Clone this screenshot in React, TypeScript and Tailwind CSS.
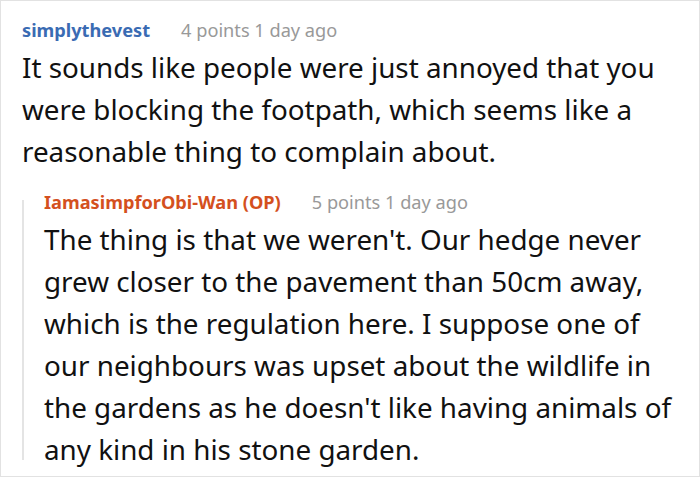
export default function App() {
  return (
    <div className="w-[700px] h-[478px] bg-white" style={{ fontFamily: '"Noto Sans", sans-serif' }}>
      <div className="w-[700px] h-[477px] border border-[#e2e2e2] pl-[21px] pr-[23px] pt-[14px]">
        <div className="flex items-baseline gap-[31px] text-[18.2px] leading-[31px]">
          <span className="font-bold text-[#3a6bb3]">simplythevest</span>
          <span className="text-[#999999]">4 points 1 day ago</span>
        </div>
        <p className="text-[#111111] text-[27.8px] leading-[42px]">
          It sounds like people were just annoyed that you were blocking the footpath, which seems like a reasonable thing to complain about.
        </p>
        <div className="mt-[15px] flex">
          <div className="w-[2px] bg-[#e4e4e4] mt-[13px] mb-[10px] shrink-0" />
          <div className="pl-[20px] min-w-0 flex-1">
            <div className="flex items-baseline gap-[31px] text-[18.2px] leading-[31px]">
              <span className="font-bold text-[#d4501e]">IamasimpforObi-Wan (OP)</span>
              <span className="text-[#999999]">5 points 1 day ago</span>
            </div>
            <p className="text-[#111111] text-[27.8px] leading-[42px]">
              The thing is that we weren't. Our hedge never grew closer to the pavement than 50cm away, which is the regulation here. I suppose one of our neighbours was upset about the wildlife in the gardens as he doesn't like having animals of any kind in his stone garden.
            </p>
          </div>
        </div>
      </div>
    </div>
  );
}
